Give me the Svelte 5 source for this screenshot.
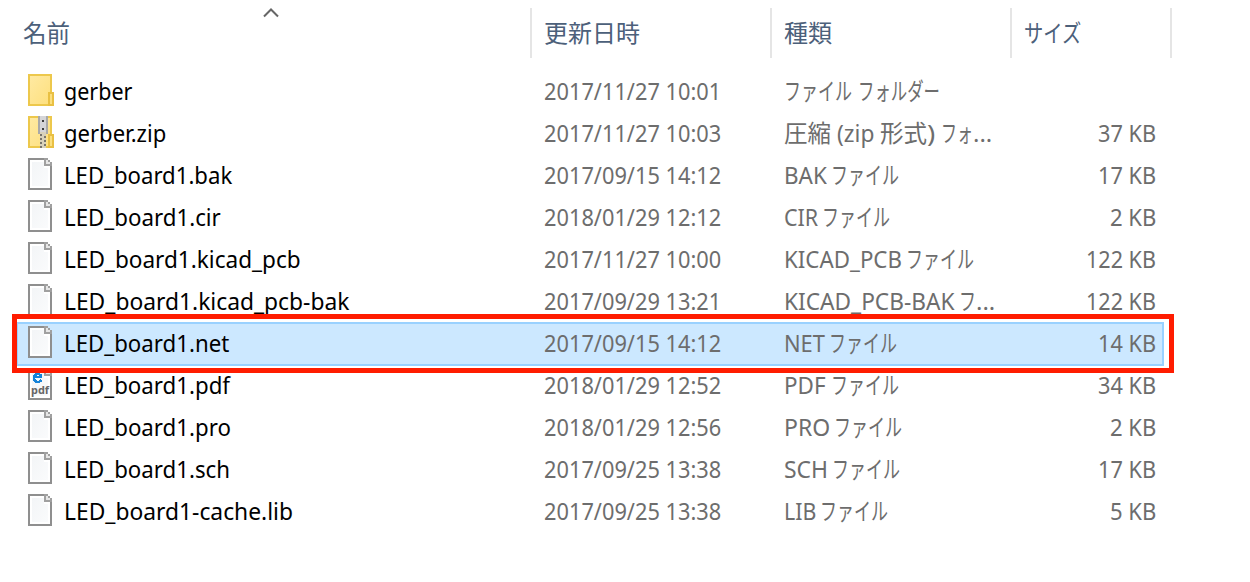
<script lang="ts">
  type Run = [text: string, width: number, gap?: number];

  interface FileRow {
    icon: 'folder' | 'zip' | 'file' | 'pdf';
    name: Run;
    date: string;
    type: Run[];
    size?: Run;
    selected?: boolean;
  }

  const kana: Run = ['ファイル', 68];

  const files: FileRow[] = [
    { icon: 'folder', name: ['gerber', 68], date: '2017/11/27 10:01', type: [['ファイル', 68, 6], ['フォルダー', 82]] },
    { icon: 'zip', name: ['gerber.zip', 102], date: '2017/11/27 10:03', type: [['圧縮', 47, 6], ['(zip', 37, 6], ['形式', 47, 0], [')', 8, 6], ['フォ', 32], ['...', 19]], size: ['37 KB', 58] },
    { icon: 'file', name: ['LED_board1.bak', 168], date: '2017/09/15 14:12', type: [['BAK', 43, 4], kana], size: ['17 KB', 58] },
    { icon: 'file', name: ['LED_board1.cir', 157], date: '2018/01/29 12:12', type: [['CIR', 34, 4], kana], size: ['2 KB', 46] },
    { icon: 'file', name: ['LED_board1.kicad_pcb', 237], date: '2017/11/27 10:00', type: [['KICAD_PCB', 118, 4], kana], size: ['122 KB', 70] },
    { icon: 'file', name: ['LED_board1.kicad_pcb-bak', 285], date: '2017/09/29 13:21', type: [['KICAD_PCB-BAK', 170, 5], ['フ', 17], ['...', 19]], size: ['122 KB', 70] },
    { icon: 'file', name: ['LED_board1.net', 165], date: '2017/09/15 14:12', type: [['NET', 41, 4], kana], size: ['14 KB', 58], selected: true },
    { icon: 'pdf', name: ['LED_board1.pdf', 166], date: '2018/01/29 12:52', type: [['PDF', 42, 5], kana], size: ['34 KB', 58] },
    { icon: 'file', name: ['LED_board1.pro', 167], date: '2018/01/29 12:56', type: [['PRO', 46, 4], kana], size: ['2 KB', 46] },
    { icon: 'file', name: ['LED_board1.sch', 166], date: '2017/09/25 13:38', type: [['SCH', 44, 4], kana], size: ['17 KB', 58] },
    { icon: 'file', name: ['LED_board1-cache.lib', 229], date: '2017/09/25 13:38', type: [['LIB', 32, 4], kana], size: ['5 KB', 46] }
  ];

  // condenses a run of text to the given width, like the narrow UI fonts do
  function fit(node: HTMLElement, width: number) {
    const scale = width / node.offsetWidth;
    node.style.width = `${width}px`;
    node.style.transform = `scaleX(${scale})`;
  }
</script>

{#snippet run([text, width, gap = 0]: Run)}
  <span class="run" style:margin-right="{gap}px" use:fit={width}>{text}</span>
{/snippet}

{#snippet icon(kind: string)}
  <svg class="icon" viewBox="0 0 26 32" width="26" height="32">
    {#if kind === 'folder' || kind === 'zip'}
      <rect x="1" y="1" width="22" height="30" fill="url(#folder)" stroke="#edc84c" stroke-width="2" />
      <rect x="21" y="19" width="4" height="12" fill="#fbdf80" stroke="#e9c043" stroke-width="2" />
      {#if kind === 'zip'}
        <rect x="10" y="0" width="10" height="18" fill="#a9a9a9" />
        <rect x="12" y="0" width="6" height="16" fill="#d5d5d8" />
        <path d="M14 4h2v2h-2zM14 12h2v2h-2z" fill="#3d3d3d" />
        <path d="M12 16h6v16h-6z" fill="#d8d1bb" />
        <path d="M12 18h2v2h-2zM16 20h2v2h-2zM12 22h2v2h-2zM16 24h2v2h-2zM12 26h2v2h-2zM16 28h2v2h-2zM12 30h2v2h-2z" fill="#77746c" />
      {/if}
    {:else}
      <path d="M0 0h20v2h2v2h2v28H0z" fill="#8f8f8f" />
      <path d="M2 2h14v6h6v22H2z" fill="#fff" />
      <path d="M4 4h12v6h4v18H4z" fill="url(#paper)" />
      <path d="M16 0h4v2h2v2h2v4h-8z" fill="#a0a0a0" />
      <path d="M18 2h2v2h2v2h-4z" fill="#e6e6e6" />
      {#if kind === 'pdf'}
        <path d="M13.6 11.6A4 4 0 1 1 13.6 8.4M6 9h8" fill="none" stroke="#1683d8" stroke-width="2.4" />
        <text x="3" y="26" textLength="18" lengthAdjust="spacingAndGlyphs">pdf</text>
      {/if}
    {/if}
  </svg>
{/snippet}

<svg class="defs" width="0" height="0">
  <linearGradient id="folder" x1="0" y1="0" x2="1" y2="1">
    <stop offset="0" stop-color="#ffeaa3" />
    <stop offset="1" stop-color="#fddf7d" />
  </linearGradient>
  <linearGradient id="paper" x1="0" y1="0" x2="1" y2="1">
    <stop offset="0" stop-color="#f3f5f7" />
    <stop offset="1" stop-color="#fafbfc" />
  </linearGradient>
</svg>

<main>
  <header>
    <div class="col first">
      {@render run(['名前', 47])}
      <svg class="sort" viewBox="0 0 18 11" width="18" height="11">
        <path d="M2 9.5L9 2.5l7 7" fill="none" stroke="#666" stroke-width="2" />
      </svg>
    </div>
    <div class="col">{@render run(['更新日時', 96])}</div>
    <div class="col">{@render run(['種類', 48])}</div>
    <div class="col">{@render run(['サイズ', 57])}</div>
  </header>

  <div class="list">
    {#each files as file}
      <div class="row" class:selected={file.selected}>
        <div class="name">
          {@render icon(file.icon)}
          {@render run(file.name)}
        </div>
        <div class="date">{@render run([file.date, 177])}</div>
        <div class="type">
          {#each file.type as part}
            {@render run(part)}
          {/each}
        </div>
        <div class="size">
          {#if file.size}{@render run(file.size)}{/if}
        </div>
        {#if file.selected}<div class="mark"></div>{/if}
      </div>
    {/each}
  </div>
</main>

<style>
  :global(body) {
    margin: 0;
    background: #fff;
  }
  main {
    width: 1250px;
    height: 582px;
    overflow: hidden;
    font-family: 'Noto Sans', 'Noto Sans CJK JP', sans-serif;
    font-size: 24px;
    line-height: 42px;
    color: #6d6d6d;
  }
  .defs {
    position: absolute;
  }
  header {
    display: grid;
    grid-template-columns: 532px 240px 240px 160px;
    height: 50px;
    padding-top: 8px;
    color: #4c607a;
  }
  .col {
    box-sizing: border-box;
    padding: 4px 0 0 12px;
    border-right: 2px solid #e5e5e5;
  }
  .col.first {
    position: relative;
    padding-left: 23px;
  }
  .sort {
    position: absolute;
    left: 262px;
    top: -1px;
  }
  .list {
    padding: 13px 0 0 17px;
  }
  .row {
    display: grid;
    position: relative;
    grid-template-columns: 527px 240px 220px 152px;
    width: 1146px;
    height: 42px;
  }
  .row > div {
    display: flex;
    align-items: center;
    box-sizing: border-box;
    height: 40px;
    white-space: nowrap;
  }
  .selected {
    background: #cce8ff;
    box-shadow: inset 0 0 0 1px #99d1ff, 0 0 0 1px #99d1ff;
  }
  .name {
    padding-left: 11px;
    color: #000;
  }
  .icon {
    margin: -2px 10px 0 0;
    shape-rendering: crispEdges;
  }
  .icon text {
    font: bold 11px 'Noto Sans', sans-serif;
    fill: #666;
  }
  .size {
    justify-content: flex-end;
  }
  .row > .mark {
    position: absolute;
    inset: -9px -11px -8px -5px;
    height: auto;
    border: 5px solid #ff1c00;
    z-index: 1;
  }
  .run {
    display: inline-block;
    flex: none;
    white-space: nowrap;
    transform-origin: left center;
  }
</style>
